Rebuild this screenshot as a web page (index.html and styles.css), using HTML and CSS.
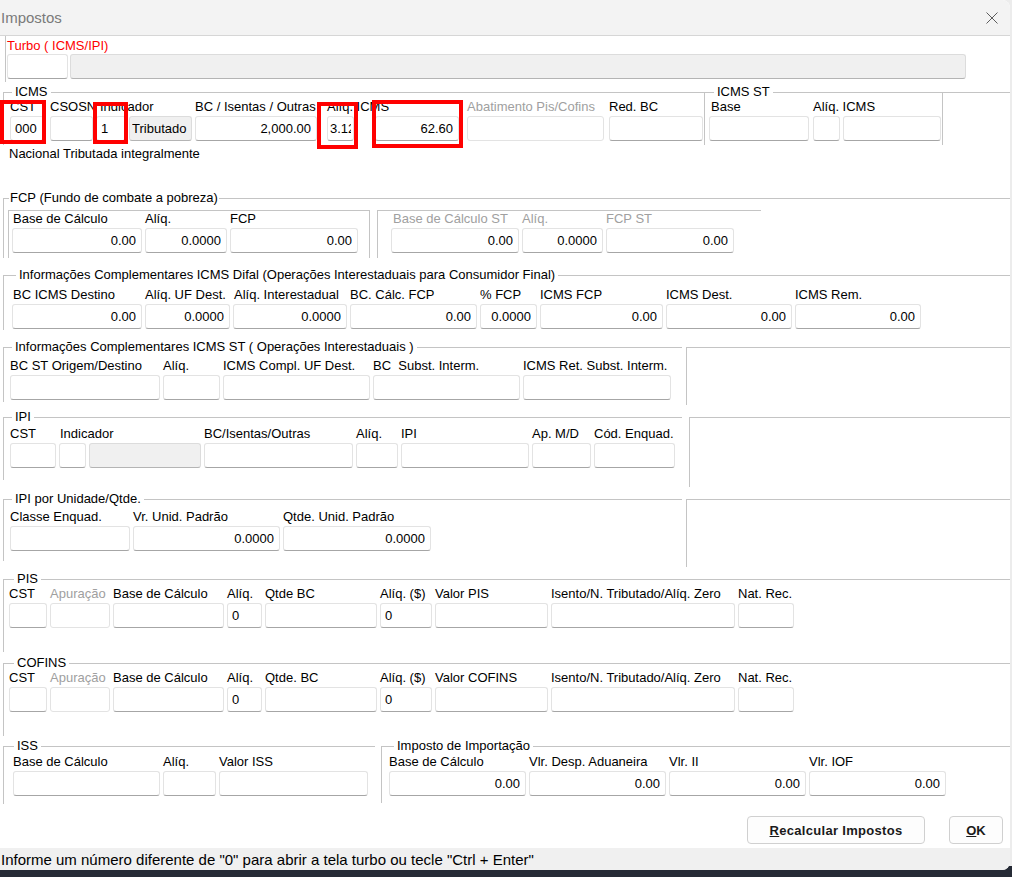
FILE: index.html
```html
<html>
  <head>
    <meta charset="utf-8">
    <title>Impostos</title>

    <link rel="stylesheet" href="styles.css">
  </head>
  <body>
    <div class="imp_window">
      <div class="imp_titlebar">
        <span class="imp_title">Impostos</span>
        <svg class="imp_close" width="12" height="12" viewBox="0 0 12 12">
          <path d="M0.5 0.5 L11.5 11.5 M11.5 0.5 L0.5 11.5" stroke="#5c5c5c" stroke-width="1" fill="none"/>
        </svg>
      </div>

      <form class="imp_form" onsubmit="return false">

        <!-- Turbo -->
        <div class="imp_turbo">
          <div class="imp_turbo_caption">Turbo ( ICMS/IPI)</div>
          <div class="imp_turbo_fields">
            <input class="imp_edit w61" value="">
            <input class="imp_edit imp_ro w896" value="">
          </div>
        </div>

        <!-- ICMS / ICMS ST -->
        <div class="imp_row r_icms">
          <fieldset class="imp_group g_icms">
            <legend>ICMS</legend>
            <div class="imp_fields">
              <div class="imp_cell w34"><label>CST</label><input class="imp_edit" value="000"></div>
              <div class="imp_cell w43 sp3"><label>CSOSN</label><input class="imp_edit" value=""></div>
              <div class="imp_cell w30"><label class="ind4">Indicador</label><input class="imp_edit" value="1"></div>
              <div class="imp_cell w63"><label></label><input class="imp_edit imp_ro imp_tight" value="Tributado"></div>
              <div class="imp_cell w122"><label>BC / Isentas / Outras</label><input class="imp_edit imp_num" value="2,000.00"></div>
              <div class="imp_cell w27 sp7"><label>Alíq. ICMS</label><input class="imp_edit imp_tight" value="3.12"></div>
              <div class="imp_cell w84 sp18"><label></label><input class="imp_edit imp_num" value="62.60"></div>
              <div class="imp_cell w137 sp5"><label class="imp_dim">Abatimento Pis/Cofins</label><input class="imp_edit imp_off" value=""></div>
              <div class="imp_cell w94 sp2"><label>Red. BC</label><input class="imp_edit" value=""></div>
            </div>
          </fieldset>
          <fieldset class="imp_group g_icmsst">
            <legend>ICMS ST</legend>
            <div class="imp_fields">
              <div class="imp_cell w100"><label class="ind2">Base</label><input class="imp_edit" value=""></div>
              <div class="imp_cell w27 sp1"><label>Alíq. ICMS</label><input class="imp_edit" value=""></div>
              <div class="imp_cell w98"><label></label><input class="imp_edit" value=""></div>
            </div>
          </fieldset>
          <div class="imp_rule"></div>
        </div>

        <div class="imp_note">Nacional Tributada integralmente</div>

        <!-- FCP -->
        <fieldset class="imp_group g_fcp">
          <legend>FCP (Fundo de combate a pobreza)</legend>
          <div class="imp_boxes">
            <div class="imp_box box_a">
              <div class="imp_fields">
                <div class="imp_cell w130"><label class="ind1">Base de Cálculo</label><input class="imp_edit imp_num" value="0.00"></div>
                <div class="imp_cell w82"><label>Alíq.</label><input class="imp_edit imp_num" value="0.0000"></div>
                <div class="imp_cell w128"><label>FCP</label><input class="imp_edit imp_num" value="0.00"></div>
              </div>
            </div>
            <div class="imp_box box_b">
              <div class="imp_fields">
                <div class="imp_cell w128"><label class="imp_dim ind2">Base de Cálculo ST</label><input class="imp_edit imp_num" value="0.00"></div>
                <div class="imp_cell w81"><label class="imp_dim">Alíq.</label><input class="imp_edit imp_num" value="0.0000"></div>
                <div class="imp_cell w128"><label class="imp_dim">FCP ST</label><input class="imp_edit imp_num" value="0.00"></div>
              </div>
            </div>
          </div>
        </fieldset>

        <!-- Difal -->
        <fieldset class="imp_group g_difal">
          <legend>Informações Complementares ICMS Difal (Operações Interestaduais para Consumidor Final)</legend>
          <div class="imp_fields">
            <div class="imp_cell w130"><label class="ind1">BC ICMS Destino</label><input class="imp_edit imp_num" value="0.00"></div>
            <div class="imp_cell w85"><label>Alíq. UF Dest.</label><input class="imp_edit imp_num" value="0.0000"></div>
            <div class="imp_cell w114"><label class="ind1">Alíq. Interestadual</label><input class="imp_edit imp_num" value="0.0000"></div>
            <div class="imp_cell w127"><label>BC. Cálc. FCP</label><input class="imp_edit imp_num" value="0.00"></div>
            <div class="imp_cell w57"><label>% FCP</label><input class="imp_edit imp_num" value="0.0000"></div>
            <div class="imp_cell w123"><label>ICMS FCP</label><input class="imp_edit imp_num" value="0.00"></div>
            <div class="imp_cell w126"><label>ICMS Dest.</label><input class="imp_edit imp_num" value="0.00"></div>
            <div class="imp_cell w126"><label>ICMS Rem.</label><input class="imp_edit imp_num" value="0.00"></div>
          </div>
        </fieldset>

        <!-- ICMS ST interestaduais -->
        <div class="imp_row r_st">
          <fieldset class="imp_group imp_left g_st">
            <legend>Informações Complementares ICMS ST ( Operações Interestaduais )</legend>
            <div class="imp_fields">
              <div class="imp_cell w150"><label>BC ST Origem/Destino</label><input class="imp_edit" value=""></div>
              <div class="imp_cell w57"><label>Alíq.</label><input class="imp_edit" value=""></div>
              <div class="imp_cell w147"><label>ICMS Compl. UF Dest.</label><input class="imp_edit" value=""></div>
              <div class="imp_cell w147"><label>BC&nbsp; Subst. Interm.</label><input class="imp_edit" value=""></div>
              <div class="imp_cell w148"><label>ICMS Ret. Subst. Interm.</label><input class="imp_edit" value=""></div>
            </div>
          </fieldset>
          <div class="imp_side side_st"></div>
        </div>

        <!-- IPI -->
        <div class="imp_row r_ipi">
          <fieldset class="imp_group imp_left g_ipi">
            <legend>IPI</legend>
            <div class="imp_fields">
              <div class="imp_cell w46"><label>CST</label><input class="imp_edit" value=""></div>
              <div class="imp_cell w27"><label class="ind1">Indicador</label><input class="imp_edit" value=""></div>
              <div class="imp_cell w112"><label></label><input class="imp_edit imp_ro" value=""></div>
              <div class="imp_cell w149"><label>BC/Isentas/Outras</label><input class="imp_edit" value=""></div>
              <div class="imp_cell w42"><label>Alíq.</label><input class="imp_edit" value=""></div>
              <div class="imp_cell w128"><label>IPI</label><input class="imp_edit" value=""></div>
              <div class="imp_cell w59"><label>Ap. M/D</label><input class="imp_edit" value=""></div>
              <div class="imp_cell w81"><label>Cód. Enquad.</label><input class="imp_edit" value=""></div>
            </div>
          </fieldset>
          <div class="imp_side side_ipi"></div>
        </div>

        <!-- IPI por unidade -->
        <div class="imp_row r_unid">
          <fieldset class="imp_group imp_left g_unid">
            <legend>IPI por Unidade/Qtde.</legend>
            <div class="imp_fields">
              <div class="imp_cell w120"><label>Classe Enquad.</label><input class="imp_edit" value=""></div>
              <div class="imp_cell w147"><label>Vr. Unid. Padrão</label><input class="imp_edit imp_num" value="0.0000"></div>
              <div class="imp_cell w148"><label>Qtde. Unid. Padrão</label><input class="imp_edit imp_num" value="0.0000"></div>
            </div>
          </fieldset>
          <div class="imp_side side_unid"></div>
        </div>

        <!-- PIS -->
        <fieldset class="imp_group g_pis">
          <legend>PIS</legend>
          <div class="imp_fields">
            <div class="imp_cell w38"><label>CST</label><input class="imp_edit" value=""></div>
            <div class="imp_cell w60"><label class="imp_dim">Apuração</label><input class="imp_edit imp_off" value=""></div>
            <div class="imp_cell w111"><label>Base de Cálculo</label><input class="imp_edit" value=""></div>
            <div class="imp_cell w35"><label>Alíq.</label><input class="imp_edit" value="0"></div>
            <div class="imp_cell w112"><label>Qtde BC</label><input class="imp_edit" value=""></div>
            <div class="imp_cell w52"><label>Alíq. ($)</label><input class="imp_edit" value="0"></div>
            <div class="imp_cell w113"><label>Valor PIS</label><input class="imp_edit" value=""></div>
            <div class="imp_cell w184"><label>Isento/N. Tributado/Alíq. Zero</label><input class="imp_edit" value=""></div>
            <div class="imp_cell w56"><label>Nat. Rec.</label><input class="imp_edit" value=""></div>
          </div>
        </fieldset>

        <!-- COFINS -->
        <fieldset class="imp_group g_cofins">
          <legend>COFINS</legend>
          <div class="imp_fields">
            <div class="imp_cell w38"><label>CST</label><input class="imp_edit" value=""></div>
            <div class="imp_cell w60"><label class="imp_dim">Apuração</label><input class="imp_edit imp_off" value=""></div>
            <div class="imp_cell w111"><label>Base de Cálculo</label><input class="imp_edit" value=""></div>
            <div class="imp_cell w35"><label>Alíq.</label><input class="imp_edit" value="0"></div>
            <div class="imp_cell w112"><label>Qtde. BC</label><input class="imp_edit" value=""></div>
            <div class="imp_cell w52"><label>Alíq. ($)</label><input class="imp_edit" value="0"></div>
            <div class="imp_cell w113"><label>Valor COFINS</label><input class="imp_edit" value=""></div>
            <div class="imp_cell w184"><label>Isento/N. Tributado/Alíq. Zero</label><input class="imp_edit" value=""></div>
            <div class="imp_cell w56"><label>Nat. Rec.</label><input class="imp_edit" value=""></div>
          </div>
        </fieldset>

        <!-- ISS / Importacao -->
        <div class="imp_row r_iss">
          <fieldset class="imp_group g_iss">
            <legend>ISS</legend>
            <div class="imp_fields">
              <div class="imp_cell w147"><label>Base de Cálculo</label><input class="imp_edit" value=""></div>
              <div class="imp_cell w53"><label>Alíq.</label><input class="imp_edit" value=""></div>
              <div class="imp_cell w149"><label>Valor ISS</label><input class="imp_edit" value=""></div>
            </div>
          </fieldset>
          <fieldset class="imp_group g_import">
            <legend>Imposto de Importação</legend>
            <div class="imp_fields">
              <div class="imp_cell w137"><label>Base de Cálculo</label><input class="imp_edit imp_num" value="0.00"></div>
              <div class="imp_cell w137"><label>Vlr. Desp. Aduaneira</label><input class="imp_edit imp_num" value="0.00"></div>
              <div class="imp_cell w137"><label>Vlr. II</label><input class="imp_edit imp_num" value="0.00"></div>
              <div class="imp_cell w137"><label>Vlr. IOF</label><input class="imp_edit imp_num" value="0.00"></div>
            </div>
          </fieldset>
        </div>

        <div class="imp_actions">
          <button class="imp_button btn_recalc"><u>R</u>ecalcular Impostos</button>
          <button class="imp_button btn_ok"><u>O</u>K</button>
        </div>
      </form>

      <div class="imp_status">Informe um número diferente de "0" para abrir a tela turbo ou tecle "Ctrl + Enter"</div>

      <!-- highlighted fields -->
      <div class="imp_mark m_cst"></div>
      <div class="imp_mark m_ind"></div>
      <div class="imp_mark m_aliq"></div>
      <div class="imp_mark m_icms"></div>
    </div>
  </body>
</html>
```

FILE: styles.css
```css
html
  {
  background: #262b36 linear-gradient(#ececec, #ececec) no-repeat;
  background-size: 100% 866px;
  }

body
  {
  margin: 0;
  font-family: "Liberation Sans", Arial, sans-serif;
  font-size: 13px;
  color: #000000;
  }

.imp_window
  {
  position: relative;
  width: 1010px;
  height: 870px;
  background: #ffffff;
  border-radius: 0 8px 8px 0;
  overflow: hidden;
  }

.imp_titlebar
  {
  display: flex;
  align-items: center;
  justify-content: space-between;
  height: 35px;
  padding: 0 12px 0 1px;
  background: #f3f3f3;
  border-bottom: 1px solid #d6d6d6;
  }

.imp_title
  {
  font-size: 15px;
  color: #7a7a7a;
  }

.imp_form
  {
  margin: 0;
  }

/* turbo panel */
.imp_turbo
  {
  margin-left: 5px;
  padding: 3px 0 3px 1px;
  border-left: 1px solid #c4c4c4;
  }

.imp_turbo_caption
  {
  height: 14px;
  line-height: 14px;
  color: #ff0000;
  }

.imp_turbo_fields
  {
  display: flex;
  gap: 2px;
  margin-top: 1px;
  }

/* group frames */
.imp_row
  {
  display: flex;
  align-items: flex-start;
  }

.imp_group
  {
  margin: 0 0 0 3px;
  padding: 0 0 0 6px;
  border: 0;
  border-top: 1px solid #c4c4c4;
  border-left: 1px solid #c4c4c4;
  min-width: 0;
  }

.imp_group legend
  {
  height: 14px;
  margin-left: 2px;
  padding: 0 3px;
  line-height: 14px;
  white-space: nowrap;
  }

.imp_left
  {
  box-sizing: border-box;
  width: 679px;
  flex: none;
  }

.imp_rule
  {
  flex: 1;
  margin-top: 7px;
  border-top: 1px solid #c4c4c4;
  }

.imp_side
  {
  box-sizing: border-box;
  flex: 1;
  margin-top: 7px;
  border-top: 1px solid #c4c4c4;
  border-left: 1px solid #c4c4c4;
  }

.imp_box
  {
  border-top: 1px solid #c4c4c4;
  border-left: 1px solid #c4c4c4;
  }

.imp_boxes
  {
  display: flex;
  }

/* fields */
.imp_fields
  {
  display: flex;
  gap: 3px;
  align-items: flex-start;
  }

.imp_cell
  {
  flex: none;
  }

.imp_cell label
  {
  display: block;
  height: 14px;
  margin-bottom: 2px;
  line-height: 14px;
  white-space: nowrap;
  }

.imp_edit
  {
  display: block;
  box-sizing: border-box;
  width: 100%;
  height: 25px;
  margin: 0;
  padding: 0 4px;
  border: 1px solid #e3e3e3;
  border-bottom-color: #a6a6a6;
  border-radius: 3px;
  background: #ffffff;
  font-family: "Liberation Sans", Arial, sans-serif;
  font-size: 13px;
  color: #000000;
  outline: none;
  }

.imp_num
  {
  text-align: right;
  padding-right: 5px;
  }

.imp_ro
  {
  background: #f0f0f0;
  border-color: #dcdcdc;
  border-bottom-color: #b4b4b4;
  }

.imp_off
  {
  border-bottom-color: #e3e3e3;
  }

.imp_tight
  {
  padding: 0 2px;
  }

.imp_dim
  {
  color: #a0a0a0;
  }

.ind1 { padding-left: 1px; }
.ind2 { padding-left: 2px; }
.ind4 { padding-left: 4px; }

.sp1 { margin-left: 1px; }
.sp2 { margin-left: 2px; }
.sp3 { margin-left: 3px; }
.sp5 { margin-left: 5px; }
.sp7 { margin-left: 7px; }
.sp18 { margin-left: 18px; }

.w27 { width: 27px; }
.w30 { width: 30px; }
.w34 { width: 34px; }
.w35 { width: 35px; }
.w38 { width: 38px; }
.w42 { width: 42px; }
.w43 { width: 43px; }
.w46 { width: 46px; }
.w52 { width: 52px; }
.w53 { width: 53px; }
.w56 { width: 56px; }
.w57 { width: 57px; }
.w59 { width: 59px; }
.w60 { width: 60px; }
.w61 { width: 61px; }
.w63 { width: 63px; }
.w81 { width: 81px; }
.w82 { width: 82px; }
.w84 { width: 84px; }
.w85 { width: 85px; }
.w94 { width: 94px; }
.w98 { width: 98px; }
.w100 { width: 100px; }
.w111 { width: 111px; }
.w112 { width: 112px; }
.w113 { width: 113px; }
.w114 { width: 114px; }
.w120 { width: 120px; }
.w122 { width: 122px; }
.w123 { width: 123px; }
.w126 { width: 126px; }
.w127 { width: 127px; }
.w128 { width: 128px; }
.w130 { width: 130px; }
.w137 { width: 137px; }
.w147 { width: 147px; }
.w148 { width: 148px; }
.w149 { width: 149px; }
.w150 { width: 150px; }
.w184 { width: 184px; }
.w896 { width: 896px; }

/* per group spacing */
.r_icms
  {
  margin-top: 3px;
  }

.g_icms
  {
  flex: none;
  padding: 1px 1px 4px 6px;
  }

.g_icmsst
  {
  flex: none;
  margin-left: 0;
  padding: 1px 1px 4px 4px;
  border-right: 1px solid #c4c4c4;
  }

.g_icmsst legend
  {
  margin-left: 5px;
  }

.imp_note
  {
  margin: 2px 0 0 9px;
  height: 14px;
  line-height: 14px;
  }

.g_fcp
  {
  margin-top: 30px;
  padding: 5px 0 0 4px;
  }

.g_fcp legend
  {
  margin-left: 1px;
  padding: 0 1px;
  }

.box_a
  {
  padding: 1px 11px 5px 3px;
  border-right: 1px solid #c4c4c4;
  }

.box_b
  {
  margin-left: 7px;
  padding: 1px 27px 5px 13px;
  }

.g_difal
  {
  margin-top: 10px;
  padding: 6px 0 1px 8px;
  }

.g_difal legend
  {
  margin-left: 4px;
  }

.r_st
  {
  margin-top: 10px;
  }

.g_st
  {
  padding: 5px 0 2px 6px;
  }

.side_st
  {
  height: 58px;
  margin-left: 4px;
  }

.r_ipi
  {
  margin-top: 5px;
  }

.g_ipi
  {
  padding: 3px 0 12px 6px;
  }

.side_ipi
  {
  height: 70px;
  margin-left: 7px;
  }

.r_unid
  {
  margin-top: 5px;
  }

.g_unid
  {
  padding: 4px 0 10px 6px;
  }

.side_unid
  {
  height: 68px;
  margin-left: 4px;
  }

.g_pis
  {
  margin-top: 5px;
  padding: 1px 0 24px 5px;
  }

.g_cofins
  {
  margin-top: 4px;
  padding: 1px 0 24px 5px;
  }

.g_pis legend,
.g_cofins legend
  {
  margin-left: 5px;
  }

.r_iss
  {
  margin-top: 3px;
  }

.g_iss
  {
  box-sizing: border-box;
  width: 372px;
  flex: none;
  padding: 2px 0 8px 9px;
  }

.g_iss legend
  {
  margin-left: 1px;
  }

.g_import
  {
  flex: 1;
  margin-left: 6px;
  padding: 2px 0 7px 7px;
  }

.g_import legend
  {
  margin-left: 5px;
  }

/* buttons */
.imp_actions
  {
  display: flex;
  justify-content: flex-end;
  gap: 24px;
  margin-top: 12px;
  padding-right: 7px;
  }

.imp_button
  {
  height: 28px;
  padding: 0;
  border: 1px solid #d0d0d0;
  border-radius: 4px;
  background: #fdfdfd;
  font-family: "Liberation Sans", Arial, sans-serif;
  font-size: 13px;
  font-weight: bold;
  color: #1a1a1a;
  }

.btn_recalc
  {
  width: 178px;
  letter-spacing: 0.3px;
  }

.btn_ok
  {
  width: 54px;
  }

.imp_status
  {
  margin-top: 4px;
  height: 23px;
  padding-left: 1px;
  line-height: 23px;
  font-size: 15px;
  background: #f0f0f0;
  }

/* red highlight frames */
.imp_mark
  {
  position: absolute;
  box-sizing: border-box;
  border: 4px solid #ff0000;
  }

.m_cst
  {
  left: 0;
  top: 100px;
  width: 46px;
  height: 44px;
  }

.m_ind
  {
  left: 93px;
  top: 102px;
  width: 35px;
  height: 42px;
  }

.m_aliq
  {
  left: 317px;
  top: 102px;
  width: 41px;
  height: 47px;
  }

.m_icms
  {
  left: 372px;
  top: 100px;
  width: 91px;
  height: 48px;
  }
```
